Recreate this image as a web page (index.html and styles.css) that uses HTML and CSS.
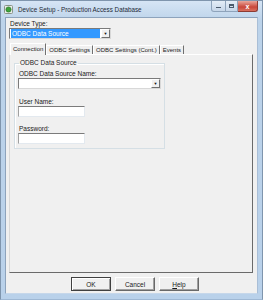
FILE: index.html
```html
<!DOCTYPE html>
<html lang="en">
<head>
    <meta charset="UTF-8">
    <meta name="viewport" content="width=device-width, initial-scale=1.0">
    <title>Device Setup</title>
    <link rel="stylesheet" href="styles.css">
</head>
<body>
    <div class="window">
        <div class="titlebar">
            <span class="app-icon">
                <svg width="9" height="9" viewBox="0 0 9 9">
                    <rect x="0.5" y="0.5" width="8" height="8" rx="1" fill="#e8ece8" stroke="#8a948a"/>
                    <circle cx="4.5" cy="4.5" r="2.6" fill="#3fa33c" stroke="#1f6e1e" stroke-width="0.6"/>
                </svg>
            </span>
            <span class="title">Device Setup - Production Access Database</span>
            <div class="caption-btns">
                <span class="cap cap-min"><i></i></span>
                <span class="cap cap-max"><i></i></span>
                <span class="cap cap-close">x</span>
            </div>
        </div>

        <div class="client">
            <div class="lbl">Device Type:</div>
            <div class="combo combo-device">
                <span class="combo-text selected">ODBC Data Source</span>
                <span class="combo-arrow">&#9660;</span>
            </div>

            <div class="tabs">
                <span class="tab active">Connection</span>
                <span class="tab">ODBC Settings</span>
                <span class="tab">ODBC Settings (Cont.)</span>
                <span class="tab">Events</span>
            </div>

            <div class="panel">
                <fieldset class="group">
                    <legend>ODBC Data Source</legend>
                    <div class="lbl lbl-first">ODBC Data Source Name:</div>
                    <div class="combo combo-dsn">
                        <span class="combo-text"></span>
                        <span class="combo-arrow">&#9660;</span>
                    </div>
                    <div class="lbl lbl-gap">User Name:</div>
                    <div class="textbox"></div>
                    <div class="lbl lbl-gap2">Password:</div>
                    <div class="textbox"></div>
                </fieldset>
            </div>

            <div class="buttons">
                <button class="btn btn-default">OK</button>
                <button class="btn">Cancel</button>
                <button class="btn"><u>H</u>elp</button>
            </div>
        </div>
    </div>
</body>
</html>
```

FILE: styles.css
```css
body {
    margin: 0;
    padding: 0;
    font-family: "Liberation Sans", Arial, sans-serif;
    font-size: 6.5px;
    color: #1a1a1a;
    background-color: #fff;
}
.window {
    width: 263px;
    height: 300px;
    box-sizing: border-box;
    background: linear-gradient(#d6e5f5, #bcd3ea 20px, #b9d1ea);
    border: 1px solid #7f95ad;
    border-bottom-color: #9fb8d4;
    display: flex;
    flex-direction: column;
}
.titlebar {
    height: 16px;
    display: flex;
    align-items: center;
    padding-left: 3px;
}
.app-icon {
    width: 9px;
    height: 9px;
    display: flex;
}
.title {
    margin-left: 5px;
    font-size: 6.3px;
    color: #1e2a36;
    white-space: nowrap;
}
.caption-btns {
    margin-left: auto;
    margin-right: 4px;
    align-self: flex-start;
    display: flex;
}
.cap {
    height: 11px;
    box-sizing: border-box;
    border: 1px solid #8ea3bb;
    border-top: none;
    background: linear-gradient(#e4edf7, #c6d6e9);
    display: flex;
    align-items: center;
    justify-content: center;
}
.cap-min {
    width: 15px;
    border-radius: 0 0 0 3px;
}
.cap-min i {
    width: 5px;
    height: 1px;
    margin-top: 3px;
    background-color: #4a5a6c;
}
.cap-max {
    width: 12px;
    border-left: none;
}
.cap-max i {
    width: 5px;
    height: 4px;
    border: 1px solid #4a5a6c;
    border-top-width: 2px;
    box-sizing: border-box;
}
.cap-close {
    width: 20px;
    border-left: none;
    border-color: #8d3b33;
    border-radius: 0 0 3px 0;
    background: linear-gradient(#e9a79c, #c9473a 60%, #d9705f);
    color: #fff;
    font-size: 7px;
    font-weight: bold;
    line-height: 1;
}
.client {
    margin: 0 4px 0 4px;
    height: 277px;
    box-sizing: border-box;
    background-color: #f0f0f0;
    border: 1px solid #8da3bc;
    border-right-color: #a9bed6;
    border-bottom-color: #c6d7ea;
    padding: 2px 3px 2px 3px;
    display: flex;
    flex-direction: column;
}
.lbl {
    line-height: 8px;
    height: 8px;
    white-space: nowrap;
    padding-left: 1px;
}
.combo {
    height: 11px;
    box-sizing: border-box;
    display: flex;
    background-color: #fff;
    border: 1px solid #7a7a7a;
    border-right-color: #d8d8d8;
    border-bottom-color: #d8d8d8;
}
.combo-device {
    width: 102px;
}
.combo-text {
    flex: 1;
    line-height: 9px;
    padding-left: 2px;
    margin: 0 1px 0 0;
}
.combo-text.selected {
    background-color: #3399ff;
    color: #fff;
    margin: 0 1px 0 1px;
    padding-left: 1px;
}
.combo-arrow {
    width: 9px;
    box-sizing: border-box;
    background-color: #f0f0f0;
    border: 1px solid #fff;
    border-right-color: #6f6f6f;
    border-bottom-color: #6f6f6f;
    font-size: 4px;
    line-height: 7px;
    text-align: center;
    color: #111;
}
.tabs {
    margin-top: 4px;
    height: 12px;
    display: flex;
    align-items: flex-end;
    padding-left: 2px;
}
.tab {
    height: 10px;
    line-height: 9px;
    padding: 0 2px;
    box-sizing: border-box;
    border-top: 1px solid #fff;
    border-left: 1px solid #fff;
    border-right: 1px solid #707070;
    white-space: nowrap;
    font-size: 6px;
}
.tab.active {
    height: 12px;
    line-height: 10px;
    margin-left: -1px;
    background-color: #f0f0f0;
    position: relative;
    z-index: 1;
}
.panel {
    height: 219px;
    box-sizing: border-box;
    border: 1px solid #fff;
    border-right-color: #6a6a6a;
    border-bottom-color: #6a6a6a;
    border-left-color: #d8d8d8;
    margin-right: 1px;
    margin-top: -1px;
}
.group {
    width: 151px;
    height: 90px;
    box-sizing: border-box;
    margin: 4px 0 0 4px;
    padding: 0 3px;
    border: 1px solid #d5dfe5;
    box-shadow: inset 1px 1px 0 #fff;
}
.group legend {
    padding: 0 1px;
    margin-left: 1px;
    line-height: 8px;
    font-size: 6.5px;
}
.lbl-first {
    margin-top: 3px;
}
.lbl-gap {
    margin-top: 9px;
}
.lbl-gap2 {
    margin-top: 8px;
}
.combo-dsn {
    width: 143px;
}
.textbox {
    width: 67px;
    height: 11px;
    box-sizing: border-box;
    background-color: #fff;
    border: 1px solid #e3e9ef;
    border-top-color: #7b7b7b;
    border-left-color: #a0a0a0;
}
.buttons {
    margin-top: 4px;
    display: flex;
    gap: 4px;
    padding-left: 62px;
}
.btn {
    width: 40px;
    height: 14px;
    padding: 0;
    box-sizing: border-box;
    font-family: "Liberation Sans", Arial, sans-serif;
    font-size: 6.5px;
    color: #1a1a1a;
    background-color: #f0f0f0;
    border: 1px solid #fff;
    border-right-color: #696969;
    border-bottom-color: #696969;
    box-shadow: inset -1px -1px 0 #a0a0a0;
}
.btn-default {
    border-color: #404040;
    box-shadow: inset 1px 1px 0 #fff, inset -1px -1px 0 #a0a0a0;
}
```
